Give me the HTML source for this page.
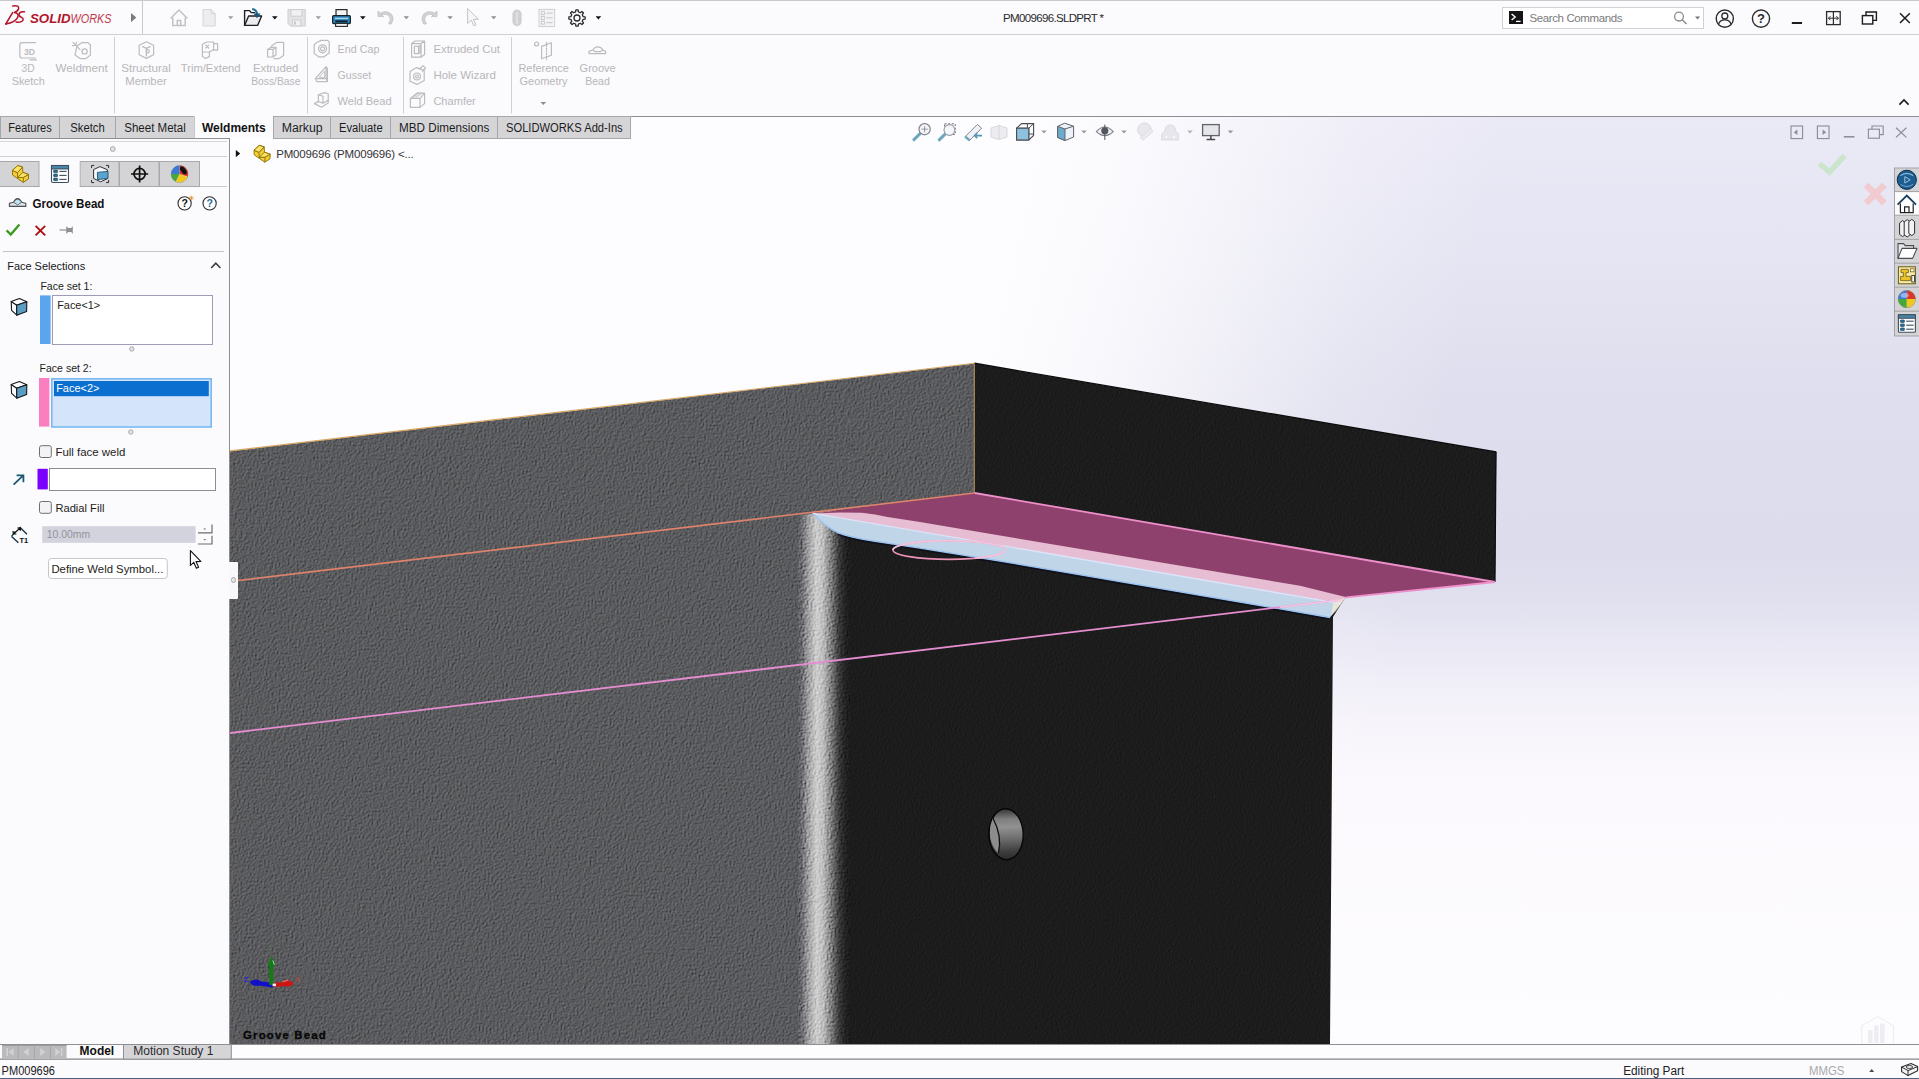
<!DOCTYPE html>
<html lang="en">
<head>
<meta charset="utf-8">
<title>PM009696.SLDPRT - SOLIDWORKS</title>
<style>
*{box-sizing:border-box;margin:0;padding:0}
html,body{width:1919px;height:1079px;overflow:hidden;background:#fbfafd;font-family:"Liberation Sans","DejaVu Sans",sans-serif;font-size:11.5px;color:#222}
.abs{position:absolute}
#titlebar{position:absolute;left:0;top:0;width:1919px;height:35px;background:#fbfafc;border-top:1px solid #c9c9cc;border-bottom:1px solid #cfcfd2}
#ribbon{position:absolute;left:0;top:35px;width:1919px;height:82px;background:#fbfafc}
.vsep{position:absolute;width:1px;background:#d2d2d5}
.rb{position:absolute;color:#b9b9bc;font-size:11.5px;line-height:13px;text-align:center;white-space:nowrap;transform:translateX(-50%)}
.rs{position:absolute;color:#b9b9bc;font-size:11.5px;line-height:13px;white-space:nowrap}
#tabs{position:absolute;left:0;top:116px;height:23px;width:640px}
.tab{position:absolute;top:0;height:22px;background:#d6d6d8;border:1px solid #a9a9ac;border-bottom:none;font-size:12px;line-height:21px;text-align:center;color:#1d1d1f;white-space:nowrap}
.tab.act{background:#fbfafc;border-color:#fbfafc;font-weight:bold;color:#111}
#left{position:absolute;left:0;top:139px;width:230px;height:905px;background:#fbfafd;border-right:1px solid #8e8e92}
#viewport{position:absolute;left:230px;top:117px;width:1689px;height:927px;overflow:hidden}
#bottomtabs{position:absolute;left:0;top:1044px;width:1919px;height:16px;background:#fbfafc}
#status{position:absolute;left:0;top:1060px;width:1919px;height:19px;background:#fbfafc;border-top:1px solid #fbfafc;font-size:12px;line-height:17px;color:#222}
.lbl{position:absolute;font-size:11.5px;line-height:13px;color:#1e1e20;white-space:nowrap}
</style>
</head>
<body>

<!-- ================= VIEWPORT ================= -->
<div id="viewport">
<svg class="abs" style="left:0;top:0" width="1689" height="927" viewBox="230 117 1689 927">
<defs>
  <linearGradient id="bgv" x1="0" y1="117" x2="0" y2="1043" gradientUnits="userSpaceOnUse">
    <stop offset="0" stop-color="#eae9f6"/>
    <stop offset="0.144" stop-color="#e5e5f3"/>
    <stop offset="0.306" stop-color="#dedeee"/>
    <stop offset="0.47" stop-color="#dcdcec"/>
    <stop offset="0.522" stop-color="#e0e0ef"/>
    <stop offset="0.565" stop-color="#e8e7f3"/>
    <stop offset="0.603" stop-color="#efedf7"/>
    <stop offset="0.65" stop-color="#f6f4fa"/>
    <stop offset="0.716" stop-color="#fbf9fd"/>
    <stop offset="1" stop-color="#fdfcfe"/>
  </linearGradient>
  <linearGradient id="bgw" x1="1010" y1="205" x2="1470" y2="297" gradientUnits="userSpaceOnUse">
    <stop offset="0" stop-color="#fdfcfe" stop-opacity="1"/>
    <stop offset="0.25" stop-color="#fdfcfe" stop-opacity="0.85"/>
    <stop offset="0.5" stop-color="#fdfcfe" stop-opacity="0.55"/>
    <stop offset="0.75" stop-color="#fdfcfe" stop-opacity="0.22"/>
    <stop offset="1" stop-color="#fdfcfe" stop-opacity="0"/>
  </linearGradient>
  <linearGradient id="corner" x1="796" y1="0" x2="850" y2="0" gradientUnits="userSpaceOnUse">
    <stop offset="0" stop-color="#595a5d"/>
    <stop offset="0.1" stop-color="#66676a"/>
    <stop offset="0.24" stop-color="#a2a2a3"/>
    <stop offset="0.38" stop-color="#cdcdce"/>
    <stop offset="0.5" stop-color="#bdbdbe"/>
    <stop offset="0.66" stop-color="#777778"/>
    <stop offset="0.8" stop-color="#38383a"/>
    <stop offset="0.92" stop-color="#212122"/>
    <stop offset="1" stop-color="#1c1c1c"/>
  </linearGradient>
  <filter id="tex" x="0" y="0" width="100%" height="100%" color-interpolation-filters="sRGB">
    <feTurbulence type="fractalNoise" baseFrequency="0.55 0.5" numOctaves="3" seed="4" result="n"/>
    <feDiffuseLighting in="n" surfaceScale="0.7" diffuseConstant="1" lighting-color="#ffffff" result="l"><feDistantLight azimuth="215" elevation="60"/></feDiffuseLighting>
    <feColorMatrix in="l" type="matrix" values="0.8 0 0 0 -0.338  0.8 0 0 0 -0.335  0.8 0 0 0 -0.324  0 0 0 0 1"/>
  </filter>
  <filter id="texd" x="0" y="0" width="100%" height="100%" color-interpolation-filters="sRGB">
    <feTurbulence type="fractalNoise" baseFrequency="0.7 0.7" numOctaves="2" seed="11" result="n"/>
    <feDiffuseLighting in="n" surfaceScale="0.35" diffuseConstant="1" lighting-color="#ffffff" result="l"><feDistantLight azimuth="200" elevation="60"/></feDiffuseLighting>
    <feColorMatrix in="l" type="matrix" values="0.42 0 0 0 -0.2534  0.42 0 0 0 -0.2534  0.42 0 0 0 -0.2534  0 0 0 0 1"/>
  </filter>
  <filter id="texc" x="0" y="0" width="100%" height="100%" color-interpolation-filters="sRGB">
    <feTurbulence type="fractalNoise" baseFrequency="0.5 0.45" numOctaves="3" seed="9" result="n"/>
    <feDiffuseLighting in="n" surfaceScale="0.8" diffuseConstant="1" lighting-color="#ffffff" result="l"><feDistantLight azimuth="215" elevation="60"/></feDiffuseLighting>
    <feColorMatrix in="l" type="matrix" values="1.7 0 0 0 -0.957  1.7 0 0 0 -0.957  1.7 0 0 0 -0.957  0 0 0 0 1"/>
  </filter>
  <linearGradient id="hole" x1="0" y1="809" x2="0" y2="859" gradientUnits="userSpaceOnUse">
    <stop offset="0" stop-color="#343434"/><stop offset="0.2" stop-color="#7e7e7e"/><stop offset="0.36" stop-color="#929292"/><stop offset="0.6" stop-color="#6c6c6c"/><stop offset="0.85" stop-color="#3e3e3e"/><stop offset="1" stop-color="#2c2c2c"/>
  </linearGradient>
  <clipPath id="cgrey"><polygon points="230,451.2 974.6,363.5 974.6,493 813.1,513.4 800,518 800,1045 230,1045"/></clipPath>
  <clipPath id="cdark"><path d="M974.6,363.5 L1496.3,452.2 L1495,582 L1345.6,597 L1333,617 L1330,1045 L846,1045 L846,536 L838,532 L813.1,513.4 L974.6,493 Z"/></clipPath>
  <clipPath id="ccorner"><path d="M798,516 L813.1,513.4 Q825,526 837.5,532.5 L850,537 L850,1045 L798,1045 Z"/></clipPath>
</defs>

<!-- background -->
<rect x="230" y="117" width="1689" height="927" fill="url(#bgv)"/>
<rect x="230" y="117" width="1689" height="927" fill="url(#bgw)"/>

<!-- grey left faces -->
<g clip-path="url(#cgrey)">
  <rect x="230" y="360" width="620" height="684" filter="url(#tex)"/>
  <rect x="850" y="360" width="130" height="160" filter="url(#tex)"/>
</g>
<!-- dark faces -->
<g clip-path="url(#cdark)">
  <rect x="836" y="360" width="664" height="684" filter="url(#texd)"/>
</g>
<!-- rounded corner -->
<g clip-path="url(#ccorner)">
  <rect x="796" y="505" width="58" height="540" fill="url(#corner)"/>
  <rect x="796" y="505" width="58" height="540" filter="url(#texc)" opacity="0.85" style="mix-blend-mode:overlay"/>
</g>

<!-- plate top orange edge & vertical edge -->
<line x1="230" y1="450.9" x2="974.6" y2="363.2" stroke="#d8a662" stroke-width="1.1"/>
<line x1="974.2" y1="363.5" x2="974.2" y2="493" stroke="#b98a55" stroke-width="1"/>
<line x1="974.6" y1="363.3" x2="1496.3" y2="452" stroke="#0c0c0c" stroke-width="1.4"/>
<line x1="1496" y1="452" x2="1495" y2="582" stroke="#0c0c0c" stroke-width="1.2"/>

<!-- pink bottom face of plate -->
<polygon points="974.6,493 1495,582 1345.6,597 1338,604 813.1,513.4" fill="#8e416c"/>
<!-- light pink strip -->
<polygon points="813.1,513.4 840,512.4 862,512.8 875,514.6 887.5,516.9 920,521.9 1000,535.6 1300,585.7 1345.6,597 1341,603.6" fill="#e6bdd3"/>
<!-- light blue bead -->
<path d="M813.1,513.4 L1341,603.6 L1335.6,610 L1330,617.5 L1300,612.2 L1000,561 L920,548.1 L875,541.3 Q850,537.4 837.5,532.5 Q825,526 813.1,513.4 Z" fill="#c1d5e8"/>
<path d="M813.1,513.4 Q825,526 837.5,532.5 Q850,537.4 875,541.3 L920,548.1 L1000,561 L1300,612.2 L1330,617.5" fill="none" stroke="#9cc3f0" stroke-width="1.4"/>
<path d="M838,534.6 Q850,539.2 875,543.2 L920,550 L1000,562.9 L1300,614.1 L1329,619.2" fill="none" stroke="#0a0d1c" stroke-width="1.2" opacity="0.8"/>
<line x1="813.1" y1="513.4" x2="1341" y2="603.6" stroke="#dde5fb" stroke-width="1.4"/>
<polygon points="1333,604 1345.6,597 1341,604 1336,611 1331,616" fill="#f4ecd8" opacity="0.75"/>
<!-- pink outlines -->
<line x1="974.6" y1="493" x2="1495" y2="582" stroke="#ee8fcb" stroke-width="1.8"/>
<line x1="1495" y1="582" x2="1345.6" y2="597.4" stroke="#ee8fcb" stroke-width="1.8"/>
<!-- orange separating line -->
<line x1="230" y1="581.5" x2="974.6" y2="493" stroke="#dd826c" stroke-width="1.7"/>
<!-- long pink line -->
<line x1="230" y1="733" x2="1330" y2="601.2" stroke="#e58dd0" stroke-width="1.8"/>
<line x1="1280" y1="607.2" x2="1341" y2="599.9" stroke="#f3c6e6" stroke-width="1.6"/>
<!-- ellipse -->
<ellipse cx="949" cy="550" rx="56" ry="9.4" fill="none" stroke="#ee93b8" stroke-width="1.6"/>
<path d="M893,550 A56,9.4 0 0 1 1005,550 A56,9.4 0 0 1 975,558.3" fill="none" stroke="#f3c4df" stroke-width="1.6"/>

<!-- hole -->
<g transform="rotate(-2 1006 834.2)">
  <ellipse cx="1006" cy="834.2" rx="17.8" ry="26.2" fill="#060606"/>
  <ellipse cx="1006.2" cy="834.2" rx="16.3" ry="24.7" fill="url(#hole)"/>
  <path d="M993.4,817.6 Q1002.6,836 997.6,853.4 Q989.4,843 989.9,832 Q990.2,824 993.4,817.6 Z" fill="#8c8c8c"/>
  <path d="M993.4,817.6 Q1002.6,836 997.6,853.4" fill="none" stroke="#0e0e0e" stroke-width="1.3"/>
</g>
<!-- overlay ui -->
<polygon points="235.8,150 240.2,153.6 235.8,157.2" fill="#111"/>
<g transform="translate(241.6 -20.2)" stroke="#8a6d00" stroke-width="0.9" stroke-linejoin="round"><path d="M12.4,170.4 L17.6,165.6 L22.6,167 L22.8,172.4 L28.6,174.4 L28.4,179 L23.2,182.4 L12.6,175 Z" fill="#f2cf3a"/><path d="M12.4,170.4 L17.4,172.6 L17.6,177.6 M17.4,172.6 L22.6,167 M23.2,182.4 L23.4,177.4 L28.6,174.4 M23.4,177.4 L17.6,177.6" fill="none"/><path d="M12.4,170.4 L17.6,165.6 L22.6,167 L17.4,172.6 Z" fill="#fbe36a"/><path d="M17.6,177.6 L22.8,172.4 L28.6,174.4 L23.4,177.4 Z" fill="#fbe36a"/></g>
<text x="276.2" y="158.4" font-family="'Liberation Sans','DejaVu Sans',sans-serif" font-size="11.5" fill="#333336" textLength="137.5" lengthAdjust="spacing">PM009696 (PM009696)  &lt;...</text>
<g opacity="0.88">
<line x1="920.6" y1="133.2" x2="914" y2="139.6" stroke="#5b9bb5" stroke-width="3" stroke-linecap="round"/><circle cx="924.6" cy="129.2" r="5.6" fill="#f4f6fa" stroke="#6f747c" stroke-width="1.2"/><path d="M924.6,126 V132.4 M921.4,129.2 H927.8" stroke="#6f747c" stroke-width="0.8"/>
<rect x="944.6" y="123.8" width="10.6" height="10.6" fill="none" stroke="#55585e" stroke-width="1" stroke-dasharray="2 1.6"/><line x1="945.6" y1="133.6" x2="939.2" y2="139.8" stroke="#5b9bb5" stroke-width="3" stroke-linecap="round"/><circle cx="949.4" cy="130" r="5.4" fill="#f4f6fa" stroke="#8c9097" stroke-width="1.1"/>
<path d="M965.2,136.6 L977.4,124.4 L981.6,128.2 L969.6,140.4 Z" fill="#eef1f5" stroke="#6f747c" stroke-width="1"/><path d="M965.2,136.6 L969.6,140.4" stroke="#5b9bb5" stroke-width="2.4"/><path d="M982,135.6 H974.6 M977.2,133 L974.6,135.6 L977.2,138.2" fill="none" stroke="#3d87ad" stroke-width="1.6"/>
<path d="M991,128 L999,125.4 L1007,128 V137 L999,139.6 L991,137 Z M999,125.4 V139.6" fill="#ebebf0" stroke="#d2d2d8" stroke-width="1"/>
<path d="M1016.6,128.2 L1021.6,123.6 H1033.6 V135.4 L1028.8,140 H1016.6 Z" fill="#fafbfd" stroke="#33363b" stroke-width="1.1"/><path d="M1016.6,128.2 H1028.8 V140 M1028.8,128.2 L1033.6,123.6 M1027.4,123.6 V128.2 M1028.8,134 H1033.6" fill="none" stroke="#33363b" stroke-width="1"/><rect x="1016.6" y="128.2" width="12.2" height="11.8" fill="#7fbadb" stroke="#33363b" stroke-width="1.1"/>
<polygon points="1041.2,130.6 1046.8,130.6 1044,133.6" fill="#8e8e92"/>
<path d="M1057.6,126.4 L1064.6,123.2 L1073.6,126.2 V137 L1065,140.6 L1057.6,137.4 Z" fill="#eaf1f7" stroke="#4a5058" stroke-width="1"/><path d="M1057.6,126.4 L1065,129 V140.6 L1057.6,137.4 Z" fill="#5aa0c8" stroke="#4a5058" stroke-width="1"/><path d="M1065,129 L1073.6,126.2" stroke="#4a5058" stroke-width="1"/>
<polygon points="1081.2,130.6 1086.8,130.6 1084,133.6" fill="#8e8e92"/>
<path d="M1096.4,131.6 Q1104.8,122.4 1113.2,131.6 Q1104.8,139.6 1096.4,131.6 Z" fill="#f2f2f5" stroke="#6a6d73" stroke-width="1.1"/><circle cx="1104.8" cy="130.8" r="3.6" fill="#3d4046"/><line x1="1104.8" y1="124.6" x2="1104.8" y2="140" stroke="#3d4046" stroke-width="1"/>
<polygon points="1121.2,130.6 1126.8,130.6 1124,133.6" fill="#8e8e92"/>
<circle cx="1144.4" cy="129.8" r="6.8" fill="#e6e6ec" stroke="#d3d3da" stroke-width="1"/><path d="M1140,137.6 L1150.6,128.4 L1153,131.6 L1143,140.2 Z" fill="#e9e9ee" stroke="#d3d3da" stroke-width="0.8"/>
<path d="M1161.6,140 V134 L1164.6,131 Q1165.4,124.8 1170.2,124.8 Q1175,124.8 1175.8,131 L1178.6,134 V140 Z" fill="#e4e4ea" stroke="#d3d3da" stroke-width="0.8"/><circle cx="1166.4" cy="137" r="1.3" fill="#f6f6f9"/><circle cx="1174" cy="137" r="1.3" fill="#f6f6f9"/>
<polygon points="1187.2,130.6 1192.8,130.6 1190,133.6" fill="#a9a9ae"/>
<rect x="1202.6" y="124.6" width="16.6" height="11" fill="#e2e4e8" stroke="#4d5057" stroke-width="1.3"/><path d="M1210.9,135.6 V139 M1206.6,139.4 H1215.2" stroke="#2d2f33" stroke-width="1.5"/>
<polygon points="1227.7,130.6 1233.3,130.6 1230.5,133.6" fill="#8e8e92"/>
</g>
<g fill="none" stroke="#8b8b92" stroke-width="1.1"><rect x="1791" y="126" width="11.6" height="12.6"/><rect x="1817.4" y="126" width="11.6" height="12.6"/><line x1="1843.8" y1="136.8" x2="1854.4" y2="136.8" stroke-width="1.5"/><path d="M1872,129 V126 H1883.2 V134.6 H1879.6"/><rect x="1868.4" y="129.2" width="11" height="9"/><path d="M1896,127.8 L1906.4,137.4 M1906.4,127.8 L1896,137.4" stroke-width="1.2"/></g>
<polygon points="1797.4,129.6 1797.4,135 1793.8,132.3" fill="#8b8b92"/><polygon points="1822.6,129.6 1822.6,135 1826.2,132.3" fill="#8b8b92"/>
<path d="M1819.4,163.6 L1829.6,172 L1844.6,155.6" fill="none" stroke="#cbe5cc" stroke-width="5.6" stroke-linejoin="miter"/>
<path d="M1866,185 L1884.4,203.2 M1884.4,185 L1866,203.2" stroke="#f1cbcf" stroke-width="6.6"/>
<rect x="1894.5" y="168" width="25" height="168" fill="#d4d4d6" stroke="#a3a3a7" stroke-width="1"/>
<rect x="1895" y="191.8" width="24.5" height="23.4" fill="#fdfdfe"/>
<line x1="1894.5" y1="191.6" x2="1919" y2="191.6" stroke="#a3a3a7" stroke-width="1"/>
<line x1="1894.5" y1="215.2" x2="1919" y2="215.2" stroke="#a3a3a7" stroke-width="1"/>
<line x1="1894.5" y1="239.4" x2="1919" y2="239.4" stroke="#a3a3a7" stroke-width="1"/>
<line x1="1894.5" y1="263.2" x2="1919" y2="263.2" stroke="#a3a3a7" stroke-width="1"/>
<line x1="1894.5" y1="287.2" x2="1919" y2="287.2" stroke="#a3a3a7" stroke-width="1"/>
<line x1="1894.5" y1="311.2" x2="1919" y2="311.2" stroke="#a3a3a7" stroke-width="1"/>
<circle cx="1906.8" cy="179.8" r="9.6" fill="#1d5d8f"/><circle cx="1906.8" cy="179.8" r="9.6" fill="none" stroke="#0c2d4a" stroke-width="1"/><path d="M1900.4,175.6 Q1906.8,171.4 1913.2,175.6" fill="none" stroke="#9cc6e6" stroke-width="1.1"/><polygon points="1904.8,176.6 1904.8,183 1910.2,179.8" fill="none" stroke="#9cc6e6" stroke-width="1"/><path d="M1900.6,184.4 Q1906.8,188.6 1913,184.4" fill="none" stroke="#6ea6d0" stroke-width="1"/>
<path d="M1897.6,204.6 L1906.8,195.6 L1916,204.6" fill="none" stroke="#173f5c" stroke-width="1.8"/><path d="M1900.4,203.4 V212.6 H1913.2 V203.4" fill="#fff" stroke="#222" stroke-width="1.2"/><path d="M1904.6,212.6 V206.8 H1909 V212.6" fill="none" stroke="#222" stroke-width="1.2"/>
<g fill="#f2f2f4" stroke="#2d2f33" stroke-width="1"><path d="M1899.6,223 L1902.6,220.6 L1905.6,223 V234.4 L1902.6,236.6 L1899.6,234.4 Z"/><path d="M1904.2,222 L1907.2,219.6 L1910.2,222 V234.8 L1907.2,237 L1904.2,234.8 Z"/><path d="M1908.8,221.6 L1911.8,219.4 L1914.6,221.6 V233.4 L1911.8,235.6 L1908.8,233.4 Z"/></g>
<path d="M1898,258.4 V243.6 H1903.6 L1905.2,245.6 H1913.6 V248.4" fill="#e6e6e8" stroke="#4a4d53" stroke-width="1.1"/><path d="M1898,258.4 L1902,248.4 H1917 L1912.6,258.4 Z" fill="#fdfdfe" stroke="#4a4d53" stroke-width="1.1" stroke-linejoin="round"/>
<rect x="1898.4" y="266.8" width="17" height="17" fill="#f6e9a8" stroke="#6b5a12" stroke-width="1"/><path d="M1901,269.4 H1908.4 V272.6 H1906 V276.4 H1910.6 V280.6 H1900.6 V276.4 H1903.4 V272.6 H1901 Z" fill="#eec32a" stroke="#6b5a12" stroke-width="0.8"/><rect x="1910.6" y="268.8" width="3.4" height="3" fill="#fff" stroke="#6b5a12" stroke-width="0.7"/><rect x="1911.8" y="275.4" width="2.6" height="6.6" fill="#fff" stroke="#222" stroke-width="0.8"/>
<circle cx="1906.8" cy="299" r="8.6" fill="#e9e9ea" stroke="#6b6b6e" stroke-width="0.7"/><path d="M1906.8,299 L1906.8,290.4 A8.6,8.6 0 0 0 1898.2,299 Z" fill="#3b78d8"/><path d="M1906.8,299 L1898.2,299 A8.6,8.6 0 0 0 1906.8,307.6 Z" fill="#46a83a"/><path d="M1906.8,299 L1906.8,307.6 A8.6,8.6 0 0 0 1915.4,299 Z" fill="#f2c81e"/><path d="M1906.8,299 L1915.4,299 A8.6,8.6 0 0 0 1906.8,290.4 Z" fill="#d8382c"/><ellipse cx="1904.6" cy="295.4" rx="4" ry="2.4" fill="#fff" opacity="0.45"/>
<rect x="1898.4" y="314.8" width="17" height="17.4" rx="1" fill="#fdfdfe" stroke="#3d4f5e" stroke-width="1.1"/><rect x="1898.4" y="314.8" width="17" height="3.4" fill="#4a87ab" stroke="#3d4f5e" stroke-width="1.1"/>
<rect x="1900.4" y="319.9" width="4" height="2.6" rx="0.6" fill="#2d6f95" stroke="#1f3f55" stroke-width="0.6"/><line x1="1906.2" y1="321.2" x2="1913.6" y2="321.2" stroke="#3d4f5e" stroke-width="1.1"/>
<rect x="1900.4" y="323.9" width="4" height="2.6" rx="0.6" fill="#2d6f95" stroke="#1f3f55" stroke-width="0.6"/><line x1="1906.2" y1="325.2" x2="1913.6" y2="325.2" stroke="#3d4f5e" stroke-width="1.1"/>
<rect x="1900.4" y="327.9" width="4" height="2.6" rx="0.6" fill="#2d6f95" stroke="#1f3f55" stroke-width="0.6"/><line x1="1906.2" y1="329.2" x2="1913.6" y2="329.2" stroke="#3d4f5e" stroke-width="1.1"/>
<!-- footer text in viewport -->
<g>
  <path d="M272.6,985 L291,983.6" stroke="#d01414" stroke-width="4.2" stroke-linecap="round"/>
  <ellipse cx="287.4" cy="983.4" rx="4.2" ry="3" fill="#d01414"/>
  <path d="M283,981.6 L288,980.2" stroke="#ee6a6a" stroke-width="1.2" stroke-linecap="round"/>
  <path d="M272,985 L252.6,982.6" stroke="#1010c8" stroke-width="4.4" stroke-linecap="round"/>
  <ellipse cx="256" cy="982.6" rx="4.2" ry="3.2" fill="#1010c8"/>
  <path d="M271.4,985 L271.2,964" stroke="#157a15" stroke-width="4.2"/>
  <polygon points="267.4,966 271.6,956 275.2,965.6" fill="#157a15"/>
  <path d="M272.8,960.4 L274.4,965" stroke="#8fd68f" stroke-width="1"/>
  <rect x="272.6" y="983.6" width="3.4" height="2.6" fill="#fbeaea"/>
  <text x="244" y="982" font-family="'Liberation Sans',sans-serif" font-size="7" font-weight="bold" fill="#2a2ae0">Z</text>
  <text x="295" y="982.4" font-family="'Liberation Sans',sans-serif" font-size="7" fill="#d64545">X</text>
  <text x="269" y="950" font-family="'Liberation Sans',sans-serif" font-size="7" fill="#4e8a4e" opacity="0.6">Y</text>
</g>
<text x="243" y="1038.6" font-family="'Liberation Sans','DejaVu Sans',sans-serif" font-weight="bold" font-size="11.4" fill="#080808" stroke="#080808" stroke-width="0.35" textLength="82.8" lengthAdjust="spacing">Groove Bead</text>
<!-- watermark -->
<g opacity="0.55">
  <polygon points="1877.6,1016.6 1893.4,1025.8 1893.4,1044.2 1877.6,1053.4 1861.8,1044.2 1861.8,1025.8" fill="none" stroke="#e3e3ea" stroke-width="1.2"/>
  <rect x="1868" y="1030" width="4.6" height="13" fill="#e3e3ea"/><rect x="1874" y="1025.4" width="4.6" height="17.6" fill="#e3e3ea"/><rect x="1880" y="1023.4" width="4.6" height="19.6" fill="#e3e3ea"/>
</g>
</svg>
</div>

<!-- ================= TITLE BAR ================= -->
<div id="titlebar">
<svg class="abs" style="left:0;top:-1px" width="1919" height="35" viewBox="0 0 1919 35" font-family="'Liberation Sans','DejaVu Sans',sans-serif">
  <!-- 3DS logo mark -->
  <g fill="none" stroke="#b3152a" stroke-width="1.5" stroke-linecap="round" stroke-linejoin="round">
    <path d="M12.8,6 Q19.4,4.8 18.6,8.8 Q18,11.2 14.2,12.6 Q19.6,13.2 17.6,17.6 Q15,22.2 5.8,24"/>
    <path d="M12.6,12.6 L5.8,24"/>
    <path d="M24.4,11.8 Q19.6,11.2 19,14.2 Q18.8,16.2 21.6,17.4 Q24.2,18.8 22.4,21 Q20.4,22.8 16,22"/>
  </g>
  <text x="30" y="23" font-size="12.6" font-weight="bold" font-style="italic" fill="#b3152a" textLength="40.5" lengthAdjust="spacingAndGlyphs">SOLID</text>
  <text x="70.5" y="23" font-size="12.6" font-style="italic" fill="#c0384a" textLength="41" lengthAdjust="spacingAndGlyphs">WORKS</text>
  <polygon points="131,13 136.3,17.6 131,22.2" fill="#7a7a7c"/>
  <line x1="142.5" y1="1" x2="142.5" y2="34" stroke="#c9c9cc" stroke-width="1"/>

  <!-- home -->
  <g fill="none" stroke="#c2c2c4" stroke-width="1.5" stroke-linejoin="miter">
    <path d="M170.5,18.5 L179,10 L187.5,18.5"/>
    <path d="M172.8,17.5 V25.6 H185.2 V17.5"/>
    <path d="M177.3,25.6 V20.4 H180.7 V25.6"/>
  </g>
  <!-- new doc -->
  <path d="M203,9.5 H211 L215.2,13.6 V26 H203 Z" fill="#ededee" stroke="#d6d6d8" stroke-width="1"/>
  <path d="M211,9.5 V13.6 H215.2" fill="none" stroke="#d6d6d8" stroke-width="1"/>
  <polygon points="228,16.2 233.4,16.2 230.7,19.2" fill="#9c9c9e"/>
  <!-- open -->
  <path d="M244.6,25.4 V10.6 H249.6 L251.2,12.6 H255" fill="none" stroke="#1f1f21" stroke-width="1.4"/>
  <path d="M244.6,25.4 L248.6,16 H261.6 L257.6,25.4 Z" fill="#ececee" stroke="#1f1f21" stroke-width="1.4" stroke-linejoin="round"/>
  <path d="M252.2,9.2 Q256.6,9.6 257,14" fill="none" stroke="#1f6c96" stroke-width="2.2"/>
  <polygon points="253.4,13.4 260.6,13.4 257,18.2" fill="#17567a"/>
  <polygon points="272,16.2 277.6,16.2 274.8,19.4" fill="#111"/>
  <!-- save -->
  <path d="M288,9.6 H305.2 V26 H290.4 L288,23.6 Z" fill="#e3e3e5" stroke="#cdcdcf" stroke-width="1"/>
  <rect x="291" y="9.6" width="11" height="6.6" fill="#f1f1f2" stroke="#cdcdcf" stroke-width="1"/>
  <rect x="292.4" y="20" width="8.4" height="6" fill="#f1f1f2" stroke="#cdcdcf" stroke-width="1"/>
  <rect x="294" y="21.6" width="2" height="3" fill="#c6c6c8"/>
  <polygon points="315.6,16.2 321,16.2 318.3,19.2" fill="#9c9c9e"/>
  <!-- print -->
  <rect x="336" y="9.6" width="11" height="7" fill="#f3f3f4" stroke="#2a2a2c" stroke-width="1.2"/>
  <rect x="332.6" y="15.6" width="17.8" height="8" rx="1.2" fill="#2a84b5" stroke="#16212b" stroke-width="1.2"/>
  <rect x="334.8" y="17.6" width="13.4" height="1.6" fill="#9fd3ee"/>
  <rect x="335.4" y="20.4" width="12.2" height="2" fill="#0d2233"/>
  <rect x="335.6" y="23.4" width="11.8" height="3" fill="#f3f3f4" stroke="#2a2a2c" stroke-width="1.1"/>
  <polygon points="360,16.2 365.6,16.2 362.8,19.4" fill="#111"/>
  <!-- undo -->
  <path d="M378,11 V16.6 H383.6 L381.6,14.6 Q386.6,12.8 389.6,16.4 Q391.6,19.6 388.6,23.6 L391,24.2 Q394.6,19 391.6,14.4 Q387,9.6 380.2,13.2 Z" fill="#d2d2d4" stroke="#c0c0c2" stroke-width="0.8"/>
  <polygon points="403.6,16.2 409,16.2 406.3,19.2" fill="#8e8e90"/>
  <!-- redo -->
  <path d="M437,11 V16.6 H431.4 L433.4,14.6 Q428.4,12.8 425.4,16.4 Q423.4,19.6 426.4,23.6 L424,24.2 Q420.4,19 423.4,14.4 Q428,9.6 434.8,13.2 Z" fill="#d2d2d4" stroke="#c0c0c2" stroke-width="0.8"/>
  <polygon points="447.4,16.2 452.8,16.2 450.1,19.2" fill="#8e8e90"/>
  <!-- cursor -->
  <path d="M467.6,8.6 V23.4 L471.2,20.2 L473.8,25.8 L476,24.8 L473.4,19.4 L478.4,19.2 Z" fill="#f6f6f7" stroke="#c4c4c6" stroke-width="1"/>
  <polygon points="491,16.2 496.4,16.2 493.7,19.2" fill="#8e8e90"/>
  <!-- pill -->
  <rect x="512.4" y="9.6" width="9.2" height="16.6" rx="4.6" fill="#cfcfd1"/>
  <rect x="515.6" y="11.4" width="2.8" height="13" rx="1.4" fill="#dededf"/>
  <!-- options list -->
  <rect x="539" y="9.4" width="15.6" height="17.2" fill="#f3f3f4" stroke="#cfcfd1" stroke-width="1"/>
  <g fill="#f6f6f7" stroke="#c6c6c8" stroke-width="0.9"><rect x="541.4" y="11.6" width="3" height="3"/><rect x="541.4" y="16.4" width="3" height="3"/><rect x="541.4" y="21.2" width="3" height="3"/></g>
  <g stroke="#c6c6c8" stroke-width="1"><line x1="546.4" y1="13.1" x2="552.6" y2="13.1"/><line x1="546.4" y1="17.9" x2="552.6" y2="17.9"/><line x1="546.4" y1="22.7" x2="552.6" y2="22.7"/></g>
  <!-- gear -->
  <path d="M583.04,16.60 L585.13,16.91 L585.13,19.09 L583.04,19.40 L582.26,21.28 L583.52,22.97 L581.97,24.52 L580.28,23.26 L578.40,24.04 L578.09,26.13 L575.91,26.13 L575.60,24.04 L573.72,23.26 L572.03,24.52 L570.48,22.97 L571.74,21.28 L570.96,19.40 L568.87,19.09 L568.87,16.91 L570.96,16.60 L571.74,14.72 L570.48,13.03 L572.03,11.48 L573.72,12.74 L575.60,11.96 L575.91,9.87 L578.09,9.87 L578.40,11.96 L580.28,12.74 L581.97,11.48 L583.52,13.03 L582.26,14.72 Z" fill="#fbfafc" stroke="#2b2b2d" stroke-width="1.3" stroke-linejoin="round"/>
  <circle cx="577" cy="18" r="3" fill="#fbfafc" stroke="#2b2b2d" stroke-width="1.3"/>
  <polygon points="595.6,16.2 601.2,16.2 598.4,19.4" fill="#111"/>

  <!-- title -->
  <text x="1003" y="22" font-size="11.5" fill="#2a2a2c" textLength="101" lengthAdjust="spacing">PM009696.SLDPRT *</text>

  <!-- search -->
  <rect x="1502.5" y="7.5" width="201" height="21" fill="#ffffff" stroke="#d2d2d5" stroke-width="1"/>
  <rect x="1509" y="11" width="14" height="13" fill="#141416"/>
  <path d="M1511.6,14 L1515.2,17 L1511.6,20" fill="none" stroke="#fff" stroke-width="1.4"/>
  <line x1="1516" y1="21.4" x2="1520.6" y2="21.4" stroke="#fff" stroke-width="1.3"/>
  <text x="1529.5" y="22" font-size="11.5" fill="#7b7b7e" textLength="93" lengthAdjust="spacing">Search Commands</text>
  <circle cx="1679" cy="16.6" r="4.4" fill="none" stroke="#8a8a8c" stroke-width="1.3"/>
  <line x1="1682.2" y1="19.8" x2="1686.6" y2="24" stroke="#8a8a8c" stroke-width="1.5"/>
  <polygon points="1695,16.6 1700.2,16.6 1697.6,19.4" fill="#777"/>
  <!-- user -->
  <circle cx="1724.8" cy="18.6" r="8.6" fill="none" stroke="#2b2b2d" stroke-width="1.4"/>
  <circle cx="1724.8" cy="16" r="3" fill="none" stroke="#2b2b2d" stroke-width="1.3"/>
  <path d="M1718.6,24.2 Q1719.6,19.8 1724.8,19.8 Q1730,19.8 1731,24.2" fill="none" stroke="#2b2b2d" stroke-width="1.3"/>
  <!-- help -->
  <circle cx="1761" cy="18.6" r="8.6" fill="none" stroke="#2b2b2d" stroke-width="1.4"/>
  <text x="1761" y="23.2" font-size="13" font-weight="bold" fill="#2b2b2d" text-anchor="middle">?</text>
  <!-- window buttons -->
  <line x1="1791.8" y1="23" x2="1802" y2="23" stroke="#1c1c1e" stroke-width="2"/>
  <rect x="1826.6" y="11.6" width="13.6" height="13" fill="none" stroke="#2b2b2d" stroke-width="1.3"/>
  <line x1="1833.4" y1="11.6" x2="1833.4" y2="24.6" stroke="#2b2b2d" stroke-width="1.2"/>
  <path d="M1828.4,18.2 H1838.4 M1830.4,16.2 L1828.4,18.2 L1830.4,20.2 M1836.4,16.2 L1838.4,18.2 L1836.4,20.2" fill="none" stroke="#2b2b2d" stroke-width="1"/>
  <path d="M1866,15.4 V12 H1876.4 V20.4 H1873" fill="none" stroke="#1c1c1e" stroke-width="1.4"/>
  <rect x="1862.4" y="15.6" width="10.4" height="8.4" fill="none" stroke="#1c1c1e" stroke-width="1.4"/>
  <path d="M1900,13.2 L1909.8,23 M1909.8,13.2 L1900,23" stroke="#1c1c1e" stroke-width="1.5"/>
</svg>
</div>

<!-- ================= RIBBON ================= -->
<div id="ribbon">
<svg class="abs" style="left:0;top:0" width="1919" height="82" viewBox="0 35 1919 82" font-family="'Liberation Sans','DejaVu Sans',sans-serif" font-size="11.5" fill="#b7b7ba">
<line x1="114.5" y1="37" x2="114.5" y2="113.5" stroke="#d0d0d3" stroke-width="1"/>
<line x1="307.5" y1="37" x2="307.5" y2="113.5" stroke="#d0d0d3" stroke-width="1"/>
<line x1="403.5" y1="37" x2="403.5" y2="113.5" stroke="#d0d0d3" stroke-width="1"/>
<line x1="511.5" y1="37" x2="511.5" y2="113.5" stroke="#d0d0d3" stroke-width="1"/>
<text x="21.5" y="72.4" textLength="13" lengthAdjust="spacingAndGlyphs" >3D</text>
<text x="11.7" y="85.4" textLength="33" lengthAdjust="spacingAndGlyphs" >Sketch</text>
<text x="55.5" y="72.4" textLength="52.3" lengthAdjust="spacingAndGlyphs" >Weldment</text>
<text x="121.3" y="72.4" textLength="49.5" lengthAdjust="spacingAndGlyphs" >Structural</text>
<text x="125.3" y="85.4" textLength="41.4" lengthAdjust="spacingAndGlyphs" >Member</text>
<text x="180.8" y="72.4" textLength="59.7" lengthAdjust="spacingAndGlyphs" >Trim/Extend</text>
<text x="253" y="72.4" textLength="45.3" lengthAdjust="spacingAndGlyphs" >Extruded</text>
<text x="251.2" y="85.4" textLength="49.3" lengthAdjust="spacingAndGlyphs" >Boss/Base</text>
<text x="337.6" y="53.4" textLength="41.8" lengthAdjust="spacingAndGlyphs" >End Cap</text>
<text x="337.6" y="79.2" textLength="33.6" lengthAdjust="spacingAndGlyphs" >Gusset</text>
<text x="337.6" y="105.2" textLength="54" lengthAdjust="spacingAndGlyphs" >Weld Bead</text>
<text x="433.4" y="53.4" textLength="66.5" lengthAdjust="spacingAndGlyphs" >Extruded Cut</text>
<text x="433.4" y="79.2" textLength="62.4" lengthAdjust="spacingAndGlyphs" >Hole Wizard</text>
<text x="433.4" y="105.2" textLength="42.4" lengthAdjust="spacingAndGlyphs" >Chamfer</text>
<text x="518.5" y="72.4" textLength="50.3" lengthAdjust="spacingAndGlyphs" >Reference</text>
<text x="519.6" y="85.4" textLength="48" lengthAdjust="spacingAndGlyphs" >Geometry</text>
<text x="579.6" y="72.4" textLength="36" lengthAdjust="spacingAndGlyphs" >Groove</text>
<text x="585.2" y="85.4" textLength="24.6" lengthAdjust="spacingAndGlyphs" >Bead</text>
<polygon points="540.4,102 546.2,102 543.3,105" fill="#8d8d90"/>
<g fill="none" stroke="#bcbcbf" stroke-width="1.2" stroke-linejoin="round" stroke-linecap="round">
<path d="M35.6,42.6 H22.4 Q19.8,42.6 19.8,45.2 V55.4 Q19.8,58 22.4,58 H35.6"/><path d="M30,59.8 H36.4"/>
<path d="M77,46 L82,42.6 H88 L90.4,45 V55 L86,58.6 H80 L75,55 Z"/><circle cx="84.6" cy="51.4" r="2.6"/><path d="M73,42.4 L80,49.6 M76.4,42.4 L75.6,45 M72.6,45.6 L75.2,45.4"/>
<path d="M146.4,41.8 L153.6,45.2 V54.8 L146.4,58.4 L139.2,54.8 V45.2 Z"/><path d="M142.6,46.6 L146.4,48.4 L150.2,46.6 M146.4,48.4 V56"/><circle cx="147.6" cy="51.2" r="1.6"/>
<path d="M202.4,44.2 L206.8,42 H213.6 V49.4 L209.4,52 H202.4 Z"/><path d="M213.6,43.6 H217.6 V50.2 H213.6 M209.4,52 V56.6 L205.6,58.4 L202.4,56.4 V52"/><path d="M205.8,45.2 L208.6,48 M208.6,45.2 L205.8,48"/>
<path d="M271.4,46 L276.6,42.4 H283.6 V55.6 L279,58.6 H274"/><path d="M267.6,49.4 L270.6,47.4 H276 V54.8 L273,57 H267.6 Z M267.6,49.4 H273 V57 M273,49.4 L276,47.4"/>
<path d="M316.2,42.8 L321,40.4 H327.6 L329.2,42 V53 L324,56.8 H318.6 L314.2,53.4 V45 Z"/><circle cx="322.6" cy="48.8" r="4"/><circle cx="322.6" cy="48.8" r="2"/>
<path d="M315.4,78.6 L326,66.6 V78.6 Z M315.4,78.6 L316.6,81.6 H327.4 V68.4 L326,66.6 M326,78.6 L327.4,81.6"/><path d="M319.4,77 L324.6,71 V77 Z" stroke-width="0.9"/>
<path d="M318.4,94.8 L324.6,92.6 L328.2,93.8 V103 L321.4,107.2 L314.4,103.6 L318.4,101.4 Z"/><path d="M318.4,101.4 L323,103.2 L328.2,100.4 M323,103.2 V96.2 L318.4,94.8"/>
<path d="M411.6,43.6 L415.2,41 H424.6 V54.6 L421,57.2 H411.6 Z M411.6,43.6 H421 V57.2 M421,43.6 L424.6,41"/><path d="M414.4,46.4 H418.6 V53.6 H414.4 Z M418.6,46.4 L420.2,45.4 V52.2 L418.6,53.6"/>
<path d="M410,71.6 L416.6,67.6 L424.2,70.4 V80.4 L417,84.4 L410,81.2 Z"/><circle cx="417" cy="76.4" r="3.4"/><circle cx="417" cy="76.4" r="1.4"/><path d="M419.6,69 L423,65.6 L425.6,68.2 L422.4,71.4"/>
<path d="M410.4,98.4 L417,93.2 H424.6 V103.6 L420,107.4 H410.4 Z M410.4,98.4 H420 V107.4 M420,98.4 L424.6,93.2"/><path d="M411.8,97.2 L418,92.6 M413.4,97.4 L419.4,92.8 M415,97.6 L420.8,93 M416.6,97.8 L422.2,93.2" stroke-width="0.7"/>
<circle cx="536.6" cy="44" r="2"/><path d="M541.6,46.4 L551.4,42.8 V55.2 L541.6,58.8 Z"/><path d="M546.5,42.4 V59.6" stroke-dasharray="1.4 1.4"/>
<path d="M589,53.6 V51.4 L592.8,50 Q594.4,46.8 598,46.8 Q601.4,46.8 602.8,50 L605.6,51.4 V53.6 Z M592.8,50 L595,51.6 L600.6,51.6 L602.8,50"/>
</g>
<text x="24" y="55" font-size="8.5" font-weight="bold" fill="#bcbcbf" textLength="11" lengthAdjust="spacingAndGlyphs">3D</text>
<path d="M1899.4,104.6 L1904,100 L1908.6,104.6" fill="none" stroke="#1c1c1e" stroke-width="1.6"/>
<line x1="630" y1="116.5" x2="1919" y2="116.5" stroke="#8e8e92" stroke-width="1"/>
</svg></div>

<!-- ================= TABS ================= -->
<div id="tabs">
<svg class="abs" style="left:0;top:0" width="640" height="24" viewBox="0 116 640 24" font-family="'Liberation Sans','DejaVu Sans',sans-serif" font-size="12" fill="#1c1c1e">
<rect x="0.5" y="116.5" width="59" height="22" fill="#d5d5d7" stroke="#a7a7aa" stroke-width="1"/>
<text x="8.3" y="132" textLength="43.4" lengthAdjust="spacingAndGlyphs">Features</text>
<rect x="59.5" y="116.5" width="56" height="22" fill="#d5d5d7" stroke="#a7a7aa" stroke-width="1"/>
<text x="70.3" y="132" textLength="34.4" lengthAdjust="spacingAndGlyphs">Sketch</text>
<rect x="115.5" y="116.5" width="79" height="22" fill="#d5d5d7" stroke="#a7a7aa" stroke-width="1"/>
<text x="124.2" y="132" textLength="61.6" lengthAdjust="spacingAndGlyphs">Sheet Metal</text>
<rect x="194.6" y="116" width="78" height="22" fill="#fbfafc"/>
<text x="202" y="132" font-weight="bold" textLength="63.8" lengthAdjust="spacingAndGlyphs" fill="#111">Weldments</text>
<rect x="273.5" y="116.5" width="57" height="22" fill="#d5d5d7" stroke="#a7a7aa" stroke-width="1"/>
<text x="281.7" y="132" textLength="41" lengthAdjust="spacingAndGlyphs">Markup</text>
<rect x="330.5" y="116.5" width="60" height="22" fill="#d5d5d7" stroke="#a7a7aa" stroke-width="1"/>
<text x="339" y="132" textLength="43.7" lengthAdjust="spacingAndGlyphs">Evaluate</text>
<rect x="390.5" y="116.5" width="107" height="22" fill="#d5d5d7" stroke="#a7a7aa" stroke-width="1"/>
<text x="399" y="132" textLength="90.3" lengthAdjust="spacingAndGlyphs">MBD Dimensions</text>
<rect x="497.5" y="116.5" width="133" height="22" fill="#d5d5d7" stroke="#a7a7aa" stroke-width="1"/>
<text x="506" y="132" textLength="116.7" lengthAdjust="spacingAndGlyphs">SOLIDWORKS Add-Ins</text>
<line x1="0" y1="138.5" x2="230" y2="138.5" stroke="#8e8e92" stroke-width="1"/>
</svg></div>

<!-- ================= LEFT PANEL ================= -->
<div id="left">
<svg class="abs" style="left:0;top:0" width="240" height="904" viewBox="0 139 240 904" font-family="'Liberation Sans','DejaVu Sans',sans-serif" font-size="11.5" fill="#1d1d20">
<line x1="0" y1="141.5" x2="227" y2="141.5" stroke="#d6d6d9"/><line x1="0" y1="156.5" x2="227" y2="156.5" stroke="#cfcfd2"/>
<circle cx="112.8" cy="149" r="2.4" fill="#e4e4e6" stroke="#a9a9ac" stroke-width="1"/>
<line x1="0" y1="186.5" x2="227" y2="186.5" stroke="#cbcbce"/>
<rect x="-1" y="161.5" width="40" height="25" fill="#d4d4d6" stroke="#a8a8ab" stroke-width="1"/>
<rect x="80" y="161.5" width="39" height="25" fill="#d4d4d6" stroke="#a8a8ab" stroke-width="1"/>
<rect x="119.5" y="161.5" width="39.5" height="25" fill="#d4d4d6" stroke="#a8a8ab" stroke-width="1"/>
<rect x="159.5" y="161.5" width="40.0" height="25" fill="#d4d4d6" stroke="#a8a8ab" stroke-width="1"/>
<rect x="40" y="161" width="39.5" height="27" fill="#fbfafd"/>
<g stroke="#8a6d00" stroke-width="0.9" stroke-linejoin="round"><path d="M12.4,170.4 L17.6,165.6 L22.6,167 L22.8,172.4 L28.6,174.4 L28.4,179 L23.2,182.4 L12.6,175 Z" fill="#f2cf3a"/><path d="M12.4,170.4 L17.4,172.6 L17.6,177.6 M17.4,172.6 L22.6,167 M23.2,182.4 L23.4,177.4 L28.6,174.4 M23.4,177.4 L17.6,177.6" fill="none"/><path d="M12.4,170.4 L17.6,165.6 L22.6,167 L17.4,172.6 Z" fill="#fbe36a"/><path d="M17.6,177.6 L22.8,172.4 L28.6,174.4 L23.4,177.4 Z" fill="#fbe36a"/></g>
<rect x="51.5" y="165.5" width="17" height="17" rx="1.2" fill="#fdfdfe" stroke="#3d4f5e" stroke-width="1.1"/><rect x="51.5" y="165.5" width="17" height="3.4" fill="#4a87ab" stroke="#3d4f5e" stroke-width="1.1"/>
<rect x="53.6" y="170.1" width="4" height="2.6" rx="0.6" fill="#2d6f95" stroke="#1f3f55" stroke-width="0.6"/><line x1="59.4" y1="171.4" x2="66.6" y2="171.4" stroke="#3d4f5e" stroke-width="1.1"/>
<rect x="53.6" y="174.1" width="4" height="2.6" rx="0.6" fill="#2d6f95" stroke="#1f3f55" stroke-width="0.6"/><line x1="59.4" y1="175.4" x2="66.6" y2="175.4" stroke="#3d4f5e" stroke-width="1.1"/>
<rect x="53.6" y="178.1" width="4" height="2.6" rx="0.6" fill="#2d6f95" stroke="#1f3f55" stroke-width="0.6"/><line x1="59.4" y1="179.4" x2="66.6" y2="179.4" stroke="#3d4f5e" stroke-width="1.1"/>
<g fill="none" stroke="#2d2f33" stroke-width="1"><path d="M91.6,168 V165.4 H94.2 M106,165.4 H108.6 V168 M108.6,180 V182.6 H106 M94.2,182.6 H91.6 V180"/><path d="M93.6,169.6 L100,166.6 L107.4,169.8 V178.6 L100.6,181.8 L93.6,178.4 Z" fill="#f4f7fa"/></g><path d="M97.4,172.4 L108,171.4 V178.4 L97.6,179.6 Z" fill="#5aa5cf" stroke="#1d4f6e" stroke-width="0.9"/>
<circle cx="139.6" cy="174" r="5.6" fill="none" stroke="#111" stroke-width="1.7"/><path d="M139.6,165.4 V182.6 M131,174 H148.2" stroke="#111" stroke-width="1.7"/>
<circle cx="179.6" cy="174" r="8.4" fill="#e9e9ea" stroke="#7b7b7e" stroke-width="0.7"/><path d="M179.6,174 L179.6,165.6 A8.4,8.4 0 0 0 171.2,174 Z" fill="#3b78d8"/><path d="M179.6,174 L171.2,174 A8.4,8.4 0 0 0 176,181.6 Z" fill="#46a83a"/><path d="M179.6,174 L176,181.6 A8.4,8.4 0 0 0 187.4,177 Z" fill="#f2c81e"/><path d="M179.6,174 L187.6,176.6 A8.4,8.4 0 0 0 179.6,165.6 Z" fill="#d8382c"/><ellipse cx="183.4" cy="170.4" rx="2.4" ry="4.6" transform="rotate(-35 183.4 170.4)" fill="#111"/>
<path d="M9.4,206.4 V203.2 L13.6,202.2 Q15.2,198.6 17.6,198.6 Q20,198.6 21.6,202.2 L25.8,203.2 V206.4 Z" fill="#dfe3e8" stroke="#4a5058" stroke-width="1.1" stroke-linejoin="round"/><path d="M13.6,202.2 L17.6,205 L21.6,202.2 Q19.8,199.2 17.6,199.2 Q15.4,199.2 13.6,202.2 Z" fill="#bfe3f2" stroke="#4a5058" stroke-width="0.8"/>
<text x="32.4" y="207.8" font-size="12.2" font-weight="bold" fill="#111" textLength="72" lengthAdjust="spacingAndGlyphs">Groove Bead</text>
<circle cx="184.6" cy="203.4" r="6.6" fill="#fdfdfe" stroke="#2d2d30" stroke-width="1.1"/><text x="184.6" y="207.2" font-size="10.5" font-weight="bold" text-anchor="middle" fill="#111">?</text><path d="M191.4,195.6 V200.4 M189,198 H193.8 M189.8,196.4 L193,199.6 M193,196.4 L189.8,199.6" stroke="#e8962e" stroke-width="0.8"/>
<circle cx="209.6" cy="203.4" r="6.6" fill="#fdfdfe" stroke="#2d2d30" stroke-width="1.1"/><text x="209.6" y="207.2" font-size="10.5" font-weight="bold" text-anchor="middle" fill="#2a6a90">?</text>
<path d="M6.6,230.4 L10.8,234.6 L19.4,224.6" fill="none" stroke="#3a9a1c" stroke-width="2.3" stroke-linejoin="miter"/>
<path d="M35.6,225.8 L45.2,235.4 M45.2,225.8 L35.6,235.4" stroke="#b00f12" stroke-width="1.9"/>
<path d="M59.6,230 H66.4" stroke="#909093" stroke-width="1.2"/><path d="M66.2,226.2 V233.8 L68.4,232 H71.2 L72.8,234 V226 L71.2,228 H68.4 Z" fill="#909093"/>
<line x1="3" y1="251.5" x2="224" y2="251.5" stroke="#c3c3c6"/>
<text x="7.2" y="269.8" font-size="11.8" textLength="78" lengthAdjust="spacingAndGlyphs" fill="#17171a">Face Selections</text>
<path d="M211.2,268 L215.8,263.2 L220.4,268" fill="none" stroke="#3a3a3d" stroke-width="1.5"/>
<text x="40.4" y="290.3" textLength="52" lengthAdjust="spacingAndGlyphs">Face set 1:</text>
<rect x="40" y="295.4" width="10.6" height="48.6" fill="#5ba5ef"/>
<rect x="52.5" y="295.5" width="160" height="49" fill="#fff" stroke="#9c9cb6" stroke-width="1"/>
<text x="57.2" y="309.4" textLength="43" lengthAdjust="spacingAndGlyphs">Face&lt;1&gt;</text>
<circle cx="131.8" cy="349" r="2.2" fill="#e4e4e6" stroke="#a9a9ac" stroke-width="1"/>
<g transform="translate(0 298)" stroke="#15181c" stroke-width="1.1" stroke-linejoin="round"><path d="M11.2,3.6 L19.4,0.6 L26.8,3.8 L16.6,7.2 Z" fill="#fdfdfe"/><path d="M11.2,3.6 L16.6,7.2 L16.8,17.2 L11.6,12.4 Z" fill="#fdfdfe"/><path d="M16.6,7.2 L26.8,3.8 L26.6,13.6 L16.8,17.2 Z" fill="#5a9cc2"/></g>
<text x="39.6" y="372.2" textLength="52" lengthAdjust="spacingAndGlyphs">Face set 2:</text>
<rect x="39" y="378" width="10.4" height="48.6" fill="#f97fc1"/>
<rect x="51.8" y="378.8" width="159.4" height="48.2" fill="#d3e4fb" stroke="#79b9f3" stroke-width="1.6"/>
<rect x="54" y="381" width="154.8" height="15.2" fill="#0b6fd0"/>
<text x="56.2" y="392.2" fill="#fff" textLength="43.2" lengthAdjust="spacingAndGlyphs">Face&lt;2&gt;</text>
<circle cx="130.8" cy="432" r="2.2" fill="#e4e4e6" stroke="#a9a9ac" stroke-width="1"/>
<g transform="translate(0 381)" stroke="#15181c" stroke-width="1.1" stroke-linejoin="round"><path d="M11.2,3.6 L19.4,0.6 L26.8,3.8 L16.6,7.2 Z" fill="#fdfdfe"/><path d="M11.2,3.6 L16.6,7.2 L16.8,17.2 L11.6,12.4 Z" fill="#fdfdfe"/><path d="M16.6,7.2 L26.8,3.8 L26.6,13.6 L16.8,17.2 Z" fill="#5a9cc2"/></g>
<rect x="39.5" y="445.7" width="11.8" height="11.8" rx="2" fill="#f3f3f5" stroke="#6e6e72" stroke-width="1"/>
<text x="55.4" y="456" textLength="70" lengthAdjust="spacingAndGlyphs">Full face weld</text>
<path d="M13.6,484.6 L23,475.6 M16.6,475.4 H23.4 V482.2" fill="none" stroke="#1b5876" stroke-width="1.8"/>
<rect x="37.5" y="468.8" width="10.3" height="20.6" fill="#7a00ff"/>
<rect x="49.5" y="468.5" width="166" height="22" fill="#fff" stroke="#8e8e92" stroke-width="1"/>
<rect x="39.5" y="501.5" width="11.8" height="11.8" rx="2" fill="#f3f3f5" stroke="#6e6e72" stroke-width="1"/>
<text x="55.4" y="512" textLength="49" lengthAdjust="spacingAndGlyphs">Radial Fill</text>
<path d="M11.6,536.4 L18.4,542.8 M11.6,536.4 L15.2,531.6 M19.6,527 L27,534.2" fill="none" stroke="#15384e" stroke-width="1.4"/><path d="M13.4,534 L20.4,527.8 M13,531 L13.4,534 L16.4,534 M17.4,528 L20.4,527.8 L20.4,530.8" fill="none" stroke="#111" stroke-width="1.2"/>
<text x="19.6" y="542.6" font-size="7.4" font-weight="bold" fill="#111">T1</text>
<rect x="42.2" y="526.2" width="153.4" height="16.6" fill="#d3d3de"/>
<text x="46.8" y="538.4" fill="#92929a" textLength="43.4" lengthAdjust="spacingAndGlyphs">10.00mm</text>
<path d="M198,532.8 H212 V524.6" fill="none" stroke="#6c6c70" stroke-width="1.2"/><path d="M198,544 H212 V535.8" fill="none" stroke="#6c6c70" stroke-width="1.2"/>
<polygon points="203.2,529.6 206.4,529.6 204.8,527.8" fill="#8a8a8e"/><polygon points="203.2,539 206.4,539 204.8,540.8" fill="#8a8a8e"/>
<rect x="48.5" y="558.5" width="118.8" height="20" rx="3" fill="#fff" stroke="#c6c6c9" stroke-width="1"/>
<text x="51.4" y="573" textLength="112" lengthAdjust="spacingAndGlyphs" fill="#1d1d20">Define Weld Symbol...</text>
<path d="M190.4,550.6 V565.4 L193.8,562.4 L196.4,568.2 L198.6,567.2 L196,561.6 L200.8,561.4 Z" fill="#fff" stroke="#111" stroke-width="1.1" stroke-linejoin="round"/>
</svg></div>
<div class="abs" style="left:229px;top:562px;width:9px;height:37px;background:#f8f8fb;border-radius:0 1px 1px 0"></div><div class="abs" style="left:230.6px;top:577.4px;width:5.2px;height:5.2px;border-radius:50%;border:1px solid #a9a9ac;background:#e4e4e6"></div>

<!-- ================= BOTTOM ================= -->
<div id="bottomtabs">
<svg class="abs" style="left:0;top:0" width="1919" height="16" viewBox="0 1044 1919 16" font-family="'Liberation Sans','DejaVu Sans',sans-serif" font-size="12">
  <rect x="231.5" y="1044.5" width="1688" height="14.5" fill="#fdfdfe"/>
  <line x1="0" y1="1044.5" x2="1919" y2="1044.5" stroke="#8f8f93"/>
  <line x1="0" y1="1059.2" x2="1919" y2="1059.2" stroke="#85858a" stroke-width="1.2"/>
  <rect x="2" y="1044.6" width="64.6" height="14.2" fill="#bababd"/>
  <line x1="2" y1="1045" x2="66.6" y2="1045" stroke="#7e7e82" stroke-width="1"/>
  <g stroke="#a5a5a9" stroke-width="1"><line x1="18.2" y1="1045" x2="18.2" y2="1058.8"/><line x1="34.4" y1="1045" x2="34.4" y2="1058.8"/><line x1="50.4" y1="1045" x2="50.4" y2="1058.8"/></g>
  <g fill="#d2d2d5"><polygon points="13.6,1048 13.6,1056 8.6,1052"/><rect x="6.4" y="1048" width="1.6" height="8"/><polygon points="28.6,1048 28.6,1056 23.4,1052"/><polygon points="40.2,1048 40.2,1056 45.4,1052"/><polygon points="55.2,1048 55.2,1056 60.2,1052"/><rect x="60.8" y="1048" width="1.6" height="8"/></g>
  <text x="79.6" y="1055.2" font-weight="bold" fill="#111" textLength="34.6" lengthAdjust="spacingAndGlyphs">Model</text>
  <rect x="123.5" y="1044.5" width="107.8" height="14.6" fill="#d5d5d7" stroke="#8f8f93" stroke-width="1"/>
  <text x="133.2" y="1055.4" fill="#2a2a2d" textLength="80.2" lengthAdjust="spacingAndGlyphs">Motion Study 1</text>
</svg></div>
<div id="status">
<svg class="abs" style="left:0;top:-1px" width="1919" height="20" viewBox="0 1059 1919 20" font-family="'Liberation Sans','DejaVu Sans',sans-serif" font-size="12">
  <text x="1.6" y="1074" fill="#202023" textLength="53.4" lengthAdjust="spacingAndGlyphs">PM009696</text>
  <text x="1623.2" y="1073.8" fill="#202023" textLength="61" lengthAdjust="spacingAndGlyphs">Editing Part</text>
  <text x="1809" y="1073.8" fill="#a9a9ad" textLength="35.4" lengthAdjust="spacingAndGlyphs">MMGS</text>
  <polygon points="1869.2,1071 1874.2,1071 1871.7,1068" fill="#4a4a4e"/>
  <path d="M1901.6,1066 L1911,1062.6 L1917.6,1065.6 V1069.8 L1908,1074.6 L1901.6,1070.6 Z" fill="#f3f3f5" stroke="#2d2f33" stroke-width="1.1" stroke-linejoin="round"/>
  <path d="M1901.6,1066 L1908,1069.6 L1917.6,1065.6 M1908,1069.6 V1074.6" fill="none" stroke="#2d2f33" stroke-width="1"/>
  <ellipse cx="1909.4" cy="1066" rx="3.2" ry="1.5" fill="none" stroke="#2d2f33" stroke-width="0.9"/>
  <rect x="0" y="1077.2" width="1919" height="2" fill="#1f3f66"/>
</svg></div>

</body>
</html>
